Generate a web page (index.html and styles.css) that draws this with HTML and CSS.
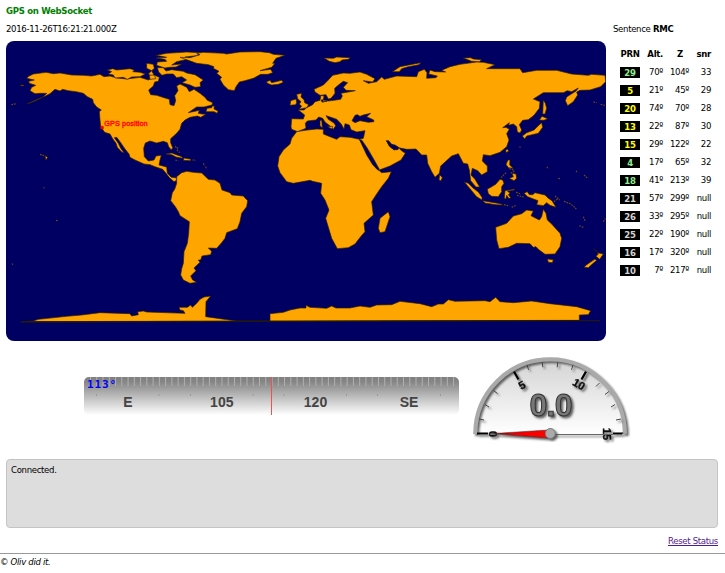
FILE: index.html
```html
<!DOCTYPE html>
<html lang="en">
<head>
<meta charset="utf-8">
<title>GPS on WebSocket</title>
<link rel="stylesheet" href="styles.css">
</head>
<body>
<main class="page">
  <h1 class="title">GPS on WebSocket</h1>
  <div class="top">
    <section class="position">
      <div class="clock">2016-11-26T16:21:21.000Z</div>
      <svg class="map" viewBox="18 123 1800 900" role="img" aria-label="World map">
        <g class="land">
          <path d="M80 235L86 229 100 222 138 217 160 221 180 219 215 225 252 226 275 228 300 223 312 230 330 228 350 234 380 237 420 232 445 240 460 232 445 222 455 212 440 205 440 190 460 193 463 205 455 212 462 225 478 232 475 244 464 246 460 258 446 270 452 284 470 286 495 294 508 298 510 314 522 317 527 302 524 287 534 272 530 258 540 252 560 262 568 275 582 268 600 280 615 292 622 301 638 308 636 315 612 321 590 321 565 338 598 331 595 340 606 342 618 343 602 352 592 348 570 352 555 360 545 370 540 388 530 400 512 416 512 428 518 443 514 450 506 440 502 428 490 424 470 429 450 423 436 429 431 445 433 470 445 483 462 480 468 468 484 466 480 480 477 495 485 497 500 501 502 520 514 532 528 533 530 541 522 545 510 535 498 520 488 508 465 500 450 494 432 492 405 480 390 472 387 462 375 447 360 425 350 412 343 413 355 430 362 445 372 458 365 456 352 442 348 430 338 416 330 402 314 397 302 380 300 360 298 335 304 330 290 321 280 308 278 298 262 290 250 280 228 275 205 272 188 268 180 273 165 268 150 281 130 291 100 305 80 312 110 299 130 290 140 280 120 280 105 281 90 272 95 262 107 256 88 250 86 244 103 240Z"/>
          <path d="M322 210L338 206 350 210 390 206 403 210 398 215 420 217 436 222 420 230 395 231 382 238 370 232 345 234 340 225 325 222 335 215ZM472 203L490 203 498 213 515 209 550 214 560 219 585 224 610 240 600 248 602 260 585 262 570 255 546 248 560 240 545 230 530 233 520 222 500 222 486 226 476 216ZM469 166L500 160 560 156 600 158 590 167 555 171 570 176 530 185 515 195 545 192 528 201 508 202 495 204 470 196 472 186 500 184 495 178 468 174 500 172ZM448 226L462 225 468 236 450 238Z"/>
          <path d="M540 172L570 173 600 164 590 160 610 157 670 160 680 162 720 156 780 155 808 158 820 163 855 166 828 175 818 190 825 190 815 202 780 212 812 208 818 218 804 223 782 223 760 235 735 242 718 246 708 260 703 272 685 269 670 255 660 238 665 232 650 220 657 214 640 205 642 200 625 194 590 190Z"/>
          <path d="M800 245L810 241 815 248 845 241 850 247 835 253 815 255 802 250ZM972 174L1000 175 1010 171 1050 173 1045 178 1026 180 1020 185 1005 188 988 184ZM890 283L905 280 903 291 912 299 914 308 926 314 920 323 897 328 905 319 898 312 903 305 893 296ZM872 302L888 297 890 308 887 314 870 316ZM621 325L635 323 637 318 643 318 642 327 654 333 652 340 642 335 618 335Z"/>
          <path d="M875 356L910 357 914 345 895 330 912 330 920 323 938 314 945 305 960 301 963 286 972 288 970 300 985 303 1008 300 1022 298 1027 288 1023 280 1045 276 1066 272 1038 271 1030 262 1043 248 1030 244 1018 253 1004 265 1005 280 993 295 985 297 978 284 960 286 945 276 942 268 970 255 985 240 998 226 1030 219 1050 220 1080 216 1100 223 1125 236 1118 246 1090 242 1105 250 1130 245 1145 231 1153 238 1190 228 1250 230 1255 215 1273 208 1281 218 1280 235 1308 233 1312 228 1286 222 1290 210 1305 215 1337 216 1325 211 1350 200 1380 193 1430 186 1450 187 1485 194 1460 206 1530 206 1560 206 1568 218 1610 211 1670 211 1715 222 1765 226 1775 223 1815 226 1817 245 1802 260 1770 270 1740 271 1730 276 1733 285 1720 305 1703 317 1696 302 1700 291 1728 273 1735 264 1715 275 1702 272 1690 278 1630 278 1600 297 1620 305 1618 325 1602 346 1585 359 1568 361 1558 374 1565 390 1560 399 1552 396 1550 380 1540 372 1526 376 1528 368 1508 383 1518 382 1528 388 1520 401 1527 420 1520 440 1500 457 1470 467 1450 464 1447 483 1462 498 1462 515 1445 525 1433 512 1417 505 1413 525 1425 538 1439 561 1428 561 1412 542 1408 510 1403 492 1390 490 1375 461 1355 468 1322 498 1318 520 1305 532 1295 515 1283 490 1280 465 1265 465 1248 447 1220 448 1190 442 1172 432 1160 423 1167 437 1182 450 1198 444 1202 450 1216 460 1203 480 1170 498 1138 510 1115 480 1095 445 1078 418 1090 415 1095 392 1070 396 1053 389 1048 375 1035 371 1032 387 1023 371 1010 358 990 351 978 347 985 358 1002 369 1007 377 1000 388 994 381 975 366 968 355 956 351 948 360 922 363 916 370 918 385 905 390 893 395 875 388 873 380Z"/>
          <path d="M890 395L915 391 950 387 970 388 970 402 990 410 1010 418 1020 410 1050 412 1078 418 1090 440 1110 470 1130 505 1145 518 1174 515 1165 535 1145 560 1128 585 1115 605 1120 645 1092 670 1095 695 1082 710 1065 732 1045 743 1012 746 995 715 977 655 987 630 975 600 962 580 965 550 938 544 930 541 880 550 860 545 840 518 833 498 837 470 850 450 870 432 875 415ZM1165 635L1170 650 1155 695 1140 698 1135 685 1140 655Z"/>
          <path d="M530 541L530 530 545 518 560 514 580 517 605 519 625 538 645 540 660 550 666 570 690 578 695 585 730 588 743 602 740 620 725 640 720 665 712 686 680 698 675 715 665 728 650 745 625 744 635 754 632 764 606 768 602 780 595 780 600 787 582 804 588 812 572 828 578 840 590 847 570 850 550 840 542 825 545 806 550 790 552 755 562 730 566 700 568 665 540 647 535 635 526 620 512 602 517 578 524 568 530 550Z"/>
          <path d="M65 965L100 963 115 958 200 949 245 945 300 938 390 941 395 948 415 944 413 935 430 933 440 936 555 940 550 932 540 930 537 922 562 922 572 915 577 922 590 910 600 898 612 891 632 888 618 905 617 950 710 963 810 963 810 941 850 937 870 930 900 924 918 924 918 916 930 922 980 925 995 918 1008 924 1050 924 1080 918 1110 922 1130 915 1175 914 1200 904 1260 911 1295 920 1315 912 1330 912 1345 899 1365 904 1455 902 1470 905 1487 892 1500 905 1540 908 1595 903 1650 911 1730 920 1772 932 1765 944 1738 945 1738 961Z"/>
          <path d="M1487 682L1520 670 1540 648 1565 641 1580 630 1600 633 1593 647 1618 660 1625 650 1630 628 1638 640 1642 660 1655 672 1680 700 1685 715 1680 740 1665 762 1635 763 1615 748 1608 740 1600 742 1590 731 1550 730 1525 742 1497 746 1490 720Z"/>
          <path d="M1642 777L1660 779 1657 788 1645 787ZM1782 745L1792 758 1810 762 1799 778 1788 769 1795 762ZM1785 777L1790 781 1777 792 1765 803 1752 802 1760 794ZM1572 580L1582 575 1588 584 1598 584 1605 578 1635 585 1645 595 1656 602 1668 622 1650 616 1640 608 1630 617 1610 614 1614 602 1595 595 1583 590ZM1462 567L1470 563 1487 553 1500 538 1508 540 1512 550 1505 560 1505 575 1495 590 1475 589 1465 581ZM1393 546L1405 550 1420 565 1435 576 1446 592 1446 600 1430 590 1415 572ZM1448 602L1470 606 1500 611 1510 615 1488 614 1455 609ZM1515 572L1545 567 1540 571 1522 573 1530 580 1525 584 1533 594 1526 595 1520 586 1517 598 1513 594Z"/>
          <path d="M1524 480L1530 480 1529 495 1540 505 1525 503 1518 493ZM1626 349L1643 356 1632 361 1618 360ZM1625 368L1628 382 1615 400 1580 408 1574 417 1567 408 1580 398 1602 390 1614 378ZM1630 300L1636 310 1640 325 1635 342 1628 342ZM1522 447L1526 453 1519 458 1517 451ZM1536 520L1548 522 1550 535 1542 542 1528 535 1540 530ZM1319 524L1327 533 1323 542 1317 540ZM1177 215L1200 200 1262 188 1257 194 1225 200 1205 206 1198 215ZM1390 174L1412 173 1420 177 1445 179 1438 185 1415 184ZM497 462L515 459 545 470 548 475 528 471 515 464ZM552 474L573 478 571 482 550 481ZM983 380L998 379 996 387ZM960 362L965 360 967 383 960 378Z"/>
          <path d="M60 255L72 255 68 258ZM135 467L143 472 138 480Z"/>
        </g>
        <path class="sea" d="M1056 362L1065 346 1072 344 1080 349 1090 345 1112 340 1100 350 1121 360 1122 365 1105 367 1080 362 1065 368ZM963 300L970 299 968 307 983 301 981 304 965 305ZM1079 419L1085 420 1101 443 1122 479 1138 508 1134 511 1118 494 1100 465ZM1159 422L1166 422 1175 433 1185 435 1196 442 1194 449 1182 449 1170 440Z"/>
        <path class="islets" d="M34 314L50 311M120 463L135 468M525 440L533 443 530 449 539 458M610 490L614 498M617 500L620 508M526 480L535 483M578 480L587 481M1503 533L1514 522 1520 516M1528 506L1542 510M1532 520L1545 512M1512 614L1528 618M1535 622L1550 615M1551 586L1572 591M1548 577L1563 582M1662 605L1675 595M1665 588L1680 600M1692 604L1708 610 1720 618 1729 627M1750 650L1756 664M1738 677L1752 683M1810 665L1816 656M1780 306L1790 308M1802 313L1814 316M1643 500L1640 506M1675 535L1680 536M1728 513L1731 516M1752 525L1762 534M1558 440L1562 442M36 791L39 794M168 661L173 662M131 563L134 564"/>
        <path class="ice-edge" d="M62 966L900 964 1738 962 1800 962"/>
        <circle class="fix" cx="306" cy="383" r="5"/>
        <text class="fix-label" x="313" y="377" textLength="130">GPS position</text>
      </svg>
    </section>
    <aside class="satellites">
      <div class="sentence">Sentence <b>RMC</b></div>
      <table>
        <thead><tr><th>PRN</th><th>Alt.</th><th>Z</th><th>snr</th></tr></thead>
        <tbody>
          <tr><td><b class="prn good">29</b></td><td>70º</td><td>104º</td><td>33</td></tr>
          <tr><td><b class="prn fair">5</b></td><td>21º</td><td>45º</td><td>29</td></tr>
          <tr><td><b class="prn fair">20</b></td><td>74º</td><td>70º</td><td>28</td></tr>
          <tr><td><b class="prn fair">13</b></td><td>22º</td><td>87º</td><td>30</td></tr>
          <tr><td><b class="prn fair">15</b></td><td>29º</td><td>122º</td><td>22</td></tr>
          <tr><td><b class="prn good">4</b></td><td>17º</td><td>65º</td><td>32</td></tr>
          <tr><td><b class="prn good">18</b></td><td>41º</td><td>213º</td><td>39</td></tr>
          <tr><td><b class="prn">21</b></td><td>57º</td><td>299º</td><td>null</td></tr>
          <tr><td><b class="prn">26</b></td><td>33º</td><td>295º</td><td>null</td></tr>
          <tr><td><b class="prn">25</b></td><td>22º</td><td>190º</td><td>null</td></tr>
          <tr><td><b class="prn">16</b></td><td>17º</td><td>320º</td><td>null</td></tr>
          <tr><td><b class="prn">10</b></td><td>7º</td><td>217º</td><td>null</td></tr>
        </tbody>
      </table>
    </aside>
  </div>
  <section class="gauges">
    <svg class="heading" viewBox="84 377 375 38">
      <defs>
        <linearGradient id="tape" x1="0" y1="0" x2="0" y2="1"><stop offset="0" stop-color="#808080"/><stop offset=".12" stop-color="#858585"/><stop offset="1" stop-color="#fff"/></linearGradient>
      </defs>
      <rect x="84" y="377" width="375" height="38" rx="5" fill="url(#tape)"/>
      <path class="degrees" d="M90 381.500H458"/>
      <path d="M96.500 394v2M159 394v2M190.500 394v2M253 394v2M284 394v2M346.500 394v2M377.500 394v2M440.500 394v2" stroke="#999"/>
      <g class="tape-labels"><text x="127.800" y="407">E</text><text x="221.800" y="407">105</text><text x="315.500" y="407">120</text><text x="409" y="407">SE</text></g>
      <rect x="271" y="377" width="1" height="38" fill="#f05050"/>
      <text class="bearing" x="87" y="388" textLength="29">113°</text>
    </svg>
    <svg class="speed" viewBox="470 354 164 90">
      <defs>
        <linearGradient id="dial" x1="0" y1="0" x2="0" y2="1"><stop offset="0" stop-color="#d3d3d3"/><stop offset="1" stop-color="#fff"/></linearGradient>
        <linearGradient id="needle" x1="0" x2="1"><stop offset="0" stop-color="#700"/><stop offset=".4" stop-color="#e00"/><stop offset="1" stop-color="#f00"/></linearGradient>
        <filter id="shade" x="-20%" y="-20%" width="150%" height="150%"><feDropShadow dx="2" dy="2" stdDeviation="1" flood-color="#444" flood-opacity=".85"/></filter>
      </defs>
      <path d="M475 434A75 75 0 0 1 625 434" fill="url(#dial)"/>
      <g filter="url(#shade)">
        <path d="M475.200 434A74.800 74.800 0 0 1 624.800 434" fill="none" stroke="#aaa" stroke-width="4"/>
      </g>
      <g filter="url(#shade)">
        <path class="major" d="M514 371.600L518.500 379.500M586 371.600L581.500 379.500"/>
        <path class="major" d="M477 433.500H487.500L488 433.700M613 433.500H622L622 433.700"/>
        <path class="minor" d="M479 419l5 1M485 404.500l4 2.500M493.500 390.500l4 3M527 364.800l1.500 5M542.300 362.300l.5 5M557.700 362.300l-.5 5M573 364.800l-1.500 5M599.500 383l-3.500 3.500M609 391.500l-4 3M615 404.500l-4 2.500M621 419l-5 1"/>
        <g class="dial-labels">
          <text transform="translate(522 385) rotate(-30)" y="4">5</text>
          <text transform="translate(579 384) rotate(30)" y="4">10</text>
          <text transform="translate(607 434) rotate(90)" y="4">15</text>
          <text transform="translate(493 434) rotate(-90)" y="4">0</text>
        </g>
        <path d="M550 434.500H613" stroke="#666" stroke-width="1.200"/>
      </g>
      <text class="reading" x="551" y="415.500" filter="url(#shade)" textLength="43">0.0</text>
      <g filter="url(#shade)">
        <path d="M491 433.700L548 430V438Z" fill="url(#needle)" stroke="#333" stroke-width=".5"/>
        <circle cx="550.300" cy="433.500" r="5" fill="#aaa" stroke="#777"/>
      </g>
    </svg>
  </section>
  <div class="status">Connected.</div>
  <div class="actions"><a class="reset" href="#">Reset Status</a></div>
</main>
<footer class="footer">© Oliv did it.</footer>
</body>
</html>
```
FILE: styles.css
```css
* { box-sizing: border-box; }

body {
  margin: 0;
  background: #fff;
  color: #000;
  font: 9.5px/12px "DejaVu Sans Condensed", "DejaVu Sans", sans-serif;
  font-stretch: condensed;
  letter-spacing: -.32px;
}

b, .title, th { font-size: 9.5px; letter-spacing: -.3px; }

.page { padding: 5px 7px 0 6px; }

.title {
  margin: 0 0 6px;
  color: green;
  line-height: 12px;
}

.top { display: flex; gap: 7px; height: 318px; }
.position { width: 600px; }
.clock { height: 18px; }

.map {
  display: block;
  width: 600px;
  height: 300px;
  border-radius: 8px;
  background: #000062;
}

.land { fill: orange; stroke: #302000; stroke-width: 2; stroke-linejoin: round; }
.sea { fill: #000062; stroke: #302000; stroke-width: 2; }
.islets { fill: none; stroke: #6b4a15; stroke-width: 3.5; stroke-dasharray: 5 3; }
.ice-edge { fill: none; stroke: #201810; stroke-width: 4; }
.fix { fill: red; stroke: #700; stroke-width: 1; }
.fix-label { fill: red; stroke: red; stroke-width: 1; font: 22px "Liberation Sans", sans-serif; letter-spacing: 0; }

.sentence { height: 22px; white-space: nowrap; }
.satellites table { margin-left: 7px; width: 91px; border-collapse: collapse; table-layout: fixed; }
.satellites th, .satellites td { height: 18px; padding: 0; text-align: right; line-height: 12px; white-space: nowrap; }
.satellites th:nth-child(1) { width: 20px; text-align: center; }
.satellites th:nth-child(2) { width: 23px; }
.satellites th:nth-child(3) { width: 26px; padding-right: 6px; }
.satellites th:nth-child(4) { width: 22px; }

.prn { display: block; width: 20px; height: 11px; line-height: 11px; background: #000; color: lightgray; text-align: center; }
.good { color: lightgreen; }
.fair { color: yellow; }

.gauges { display: flex; height: 118px; padding: 13px 0 0 78px; gap: 11px; letter-spacing: 0; }
.heading { width: 375px; height: 38px; margin-top: 23px; }
.speed { width: 164px; height: 90px; }
.degrees { stroke: #b0b0b0; stroke-width: 9; stroke-dasharray: 1 5.26; }
.tape-labels { fill: #444; font: bold 14px "Liberation Sans", sans-serif; text-anchor: middle; }
.bearing { fill: blue; font: bold 11px "DejaVu Sans Mono", monospace; }

.major { stroke: #000; stroke-width: 2.2; fill: none; }
.minor { stroke: #444; stroke-width: 1; fill: none; }
.dial-labels { fill: #111; stroke: #111; stroke-width: .4; font: bold 11px "Liberation Sans", sans-serif; text-anchor: middle; }
.reading { fill: #777; stroke: #333; stroke-width: 1; font: bold 32px "Liberation Sans", sans-serif; text-anchor: middle; }

.status {
  height: 69px;
  padding: 4px;
  border: 1px solid #c4c4c4;
  border-radius: 4px;
  background: #ddd;
}

.actions { padding-top: 7px; height: 25px; text-align: right; }
.reset { color: #551a8b; }
.footer { border-top: 1px solid #999; padding-top: 2px; font-style: italic; }
```
